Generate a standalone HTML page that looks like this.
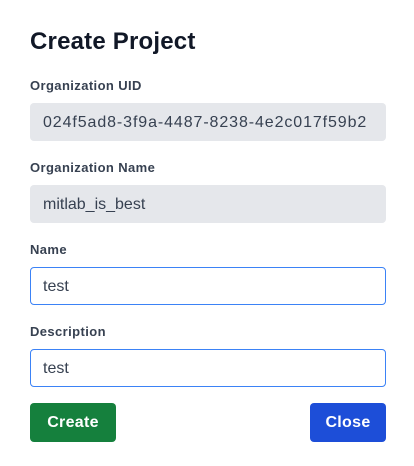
<html><head><style>
body{margin:0;width:414px;height:466px;background:#fff;font-family:"Liberation Sans",sans-serif;position:relative;overflow:hidden}
h1{position:absolute;left:30px;top:28px;margin:0;font-size:24px;font-weight:bold;color:#111827;letter-spacing:0.2px}
.l{position:absolute;left:30px;font-size:13px;font-weight:bold;color:#374151;letter-spacing:0.4px}
.i{position:absolute;left:30px;width:356px;height:38px;box-sizing:border-box;border-radius:4px;font-size:16px;color:#374151;padding-left:13px;line-height:40px}
.g{background:#e5e7eb}
.w{border:1px solid #3b82f6;line-height:38px;padding-left:12px;background:#fff}
.b{position:absolute;top:403px;height:39px;border-radius:4px;color:#fff;font-weight:bold;font-size:16px;text-align:center;line-height:39px;letter-spacing:0.3px}
</style></head><body>
<h1>Create Project</h1>
<div class="l" style="top:78px">Organization UID</div>
<div class="i g" style="top:103px;letter-spacing:0.9px">024f5ad8-3f9a-4487-8238-4e2c017f59b2</div>
<div class="l" style="top:160px">Organization Name</div>
<div class="i g" style="top:185px">mitlab_is_best</div>
<div class="l" style="top:242px">Name</div>
<div class="i w" style="top:267px">test</div>
<div class="l" style="top:324px">Description</div>
<div class="i w" style="top:349px">test</div>
<div class="b" style="left:30px;width:86px;background:#15803d">Create</div>
<div class="b" style="left:310px;width:76px;background:#1d4ed8">Close</div>
</body></html>
